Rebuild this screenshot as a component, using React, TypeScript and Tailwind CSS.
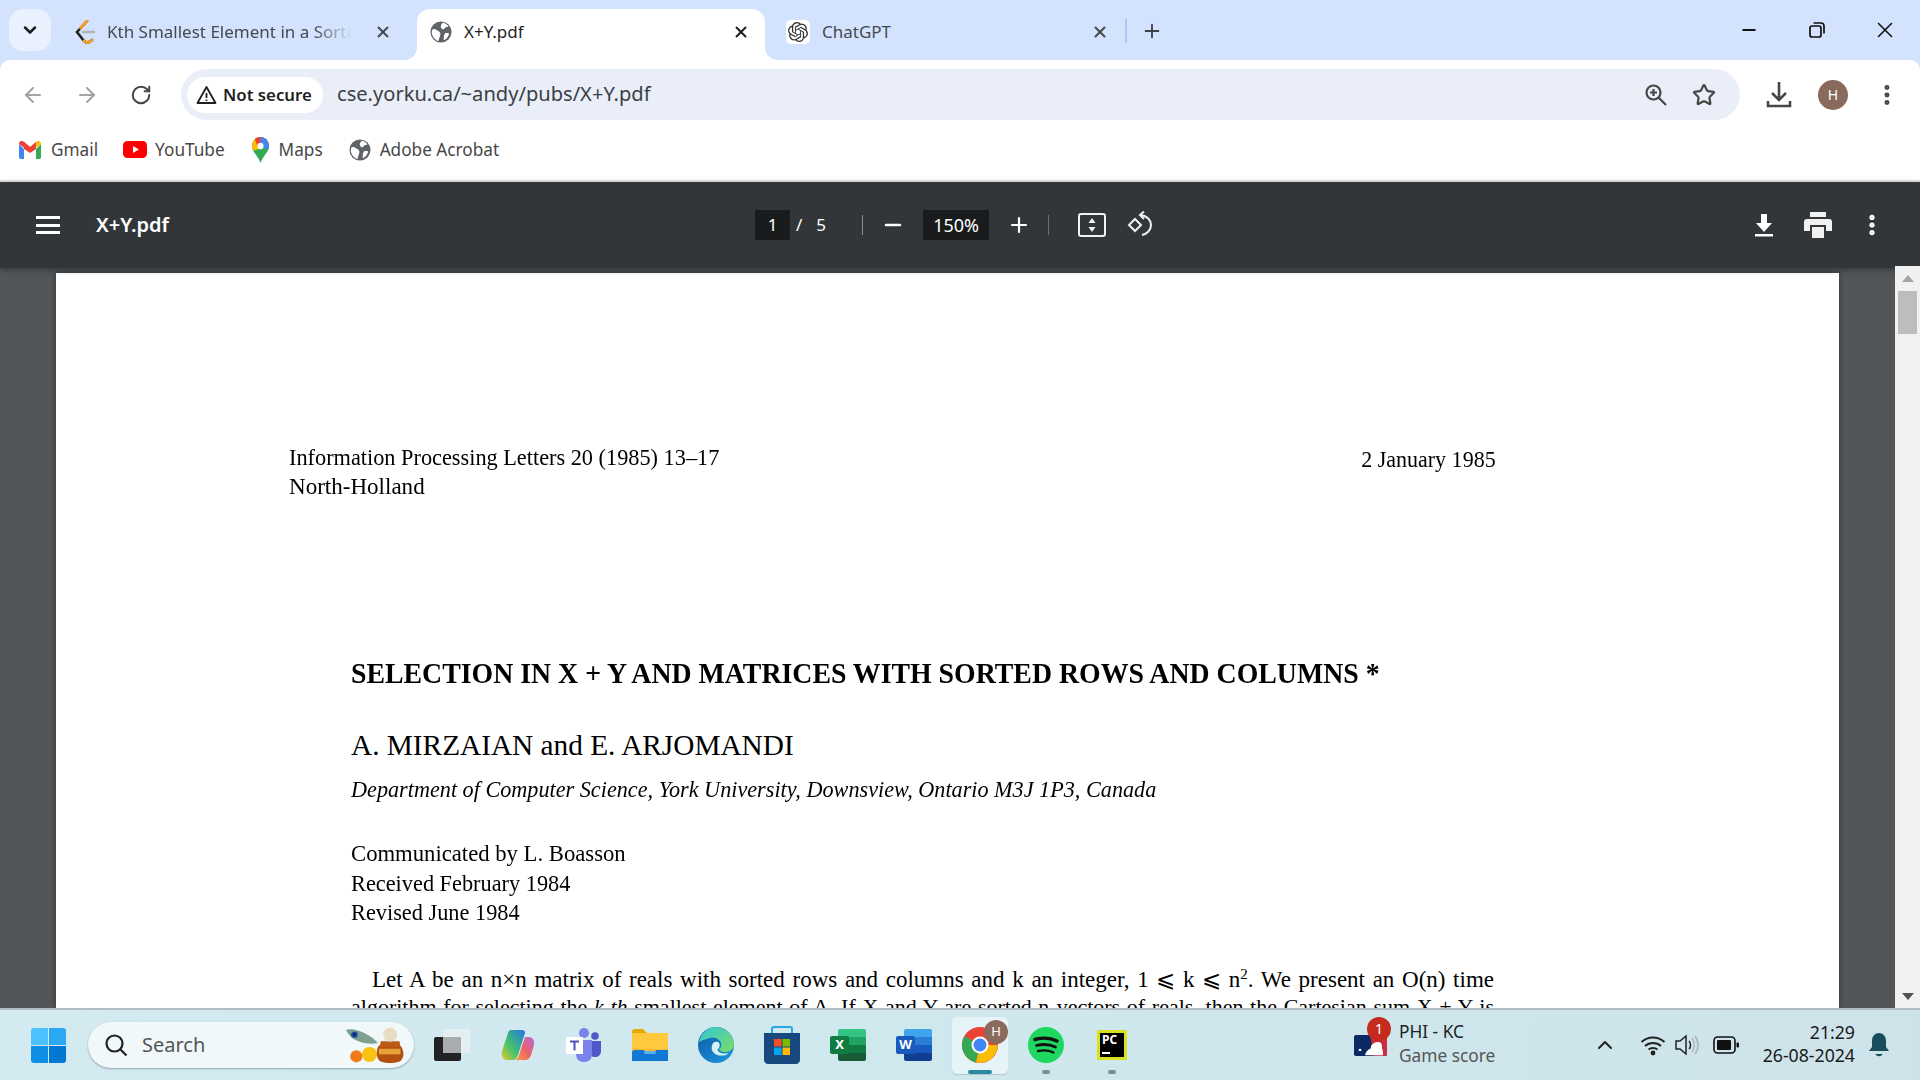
import { ArrowLeft, ArrowRight, ChevronDown, ChevronUp, Minus, MoreVertical, Plus, RotateCw, Star, X } from "lucide-react"
import { SiOpenai } from "react-icons/si"

const Globe = ({ size = 22, color = "#5f6368" }: { size?: number; color?: string }) => (
  <svg width={size} height={size} viewBox="0 0 24 24" className="shrink-0">
    <circle cx="12" cy="12" r="11.500" fill={color} />
    <path d="M3 9c3-1 4 1 6 2s3 3 2 5-1 4-2 6c-3-1-6-4-7-8 0-2 0-4 1-5zM14 2c2 0 5 2 6 4-2 1-3 0-4 2s-3 1-4-1 1-4 2-5zM17 13c2 0 4 0 4 1-1 3-3 6-6 7 0-3 0-7 2-8z" fill="#fff" />
  </svg>
)

const LeetCode = () => (
  <svg width="21" height="24" viewBox="0 0 21 24" className="shrink-0">
    <path d="M13 1 3 12l7 9c2 2 5 2 8-1" fill="none" stroke="#222" strokeWidth="2.600" strokeLinecap="round" />
    <path d="M9 12h11" stroke="#b3b3b3" strokeWidth="2.600" strokeLinecap="round" />
    <path d="M13 1 6.500 8M10 21c2 2 5 2 8-1" fill="none" stroke="#f89f1b" strokeWidth="2.600" strokeLinecap="round" />
  </svg>
)

const ChatGptIcon = () => (
  <div className="flex h-[24px] w-[24px] shrink-0 items-center justify-center rounded-[5px] bg-white">
    <SiOpenai size={20} color="#333" />
  </div>
)

const GmailIcon = () => (
  <svg width="22" height="18" viewBox="0 0 22 18" className="shrink-0">
    <path d="M0 3v13c0 1 .7 2 2 2h3V8z" fill="#4285f4" />
    <path d="M22 3v13c0 1-.7 2-2 2h-3V8z" fill="#34a853" />
    <path d="M0 3c0-3 3-4 5-2l6 5v5L0 3z" fill="#ea4335" />
    <path d="M22 3c0-3-3-4-5-2l-6 5v5l11-8z" fill="#fbbc04" />
    <path d="M5 1v7l6 4 6-4V1l-6 5z" fill="#ea4335" />
  </svg>
)

const YouTubeIcon = () => (
  <svg width="24" height="17" viewBox="0 0 24 17" className="shrink-0">
    <rect width="24" height="17" rx="4.500" fill="#f00" />
    <path d="m10 5 6 3.500-6 3.500z" fill="#fff" />
  </svg>
)

const MapsIcon = () => (
  <svg width="17" height="26" viewBox="0 0 18 26" preserveAspectRatio="none" className="shrink-0">
    <defs>
      <clipPath id="pin">
        <path d="M9 0c5 0 9 4 9 9 0 6-6 9-9 17C6 18 0 15 0 9c0-5 4-9 9-9z" />
      </clipPath>
    </defs>
    <g clipPath="url(#pin)">
      <rect width="18" height="26" fill="#34a853" />
      <path d="M0 0h18v9L0 14z" fill="#fbbc04" />
      <path d="M2 0h16v5L6 9z" fill="#ea4335" />
      <path d="M9 0h9v13L9 9z" fill="#4285f4" />
    </g>
    <circle cx="9" cy="9" r="3.200" fill="#fff" />
  </svg>
)

const WindowsIcon = () => (
  <div className="grid h-[35px] w-[35px] shrink-0 grid-cols-2 gap-[1px]">
    <div className="rounded-tl-[3px] bg-[#4cc2ff]" />
    <div className="rounded-tr-[3px] bg-[#2aa8f2]" />
    <div className="rounded-bl-[3px] bg-[#0f8fe3]" />
    <div className="rounded-br-[3px] bg-[#0078d4]" />
  </div>
)

const SearchArt = () => (
  <svg width="62" height="36" viewBox="0 0 66 38" className="shrink-0">
    <path d="M0 3c8-3 24 3 34 14-10 2-22-1-28-6-3-3-5-6-6-8z" fill="#7f9f8f" />
    <circle cx="9" cy="8" r="3.500" fill="#1c4fa8" />
    <circle cx="9" cy="8" r="1.500" fill="#0c2350" />
    <circle cx="11" cy="31" r="6.500" fill="#ee7b16" />
    <circle cx="25" cy="29" r="8" fill="#fbc30f" />
    <path d="M34 21c3-6 20-6 25 0 3 5 3 11-1 15-5 3-17 3-22 0-4-4-4-10-2-15z" fill="#b4500f" />
    <path d="M35 23h23v6H35z" fill="#e9a23a" />
    <path d="M37 15h20l1 6H36z" fill="#bb5a16" />
    <circle cx="47" cy="8" r="7.500" fill="#e8dcc2" />
  </svg>
)

const TaskViewIcon = () => (
  <div className="relative h-[32px] w-[36px]">
    <div className="absolute bottom-0 left-0 h-[24px] w-[27px] rounded-[2px] bg-[#222]" />
    <div className="absolute right-0 top-0 h-[24px] w-[27px] rounded-[2px] bg-[#e7eef0]/90" />
    <div className="absolute bottom-[8px] left-[9px] h-[16px] w-[18px] bg-[#a9acad]" />
  </div>
)

const CopilotIcon = () => (
  <svg width="34" height="32" viewBox="0 0 34 32">
    <defs>
      <linearGradient id="cp1" x1="0" y1="1" x2="1" y2="0">
        <stop offset="0" stopColor="#e6c92a" />
        <stop offset="0.4" stopColor="#45c46a" />
        <stop offset="1" stopColor="#2376e5" />
      </linearGradient>
      <linearGradient id="cp2" x1="0" y1="1" x2="1" y2="0">
        <stop offset="0" stopColor="#f2a33a" />
        <stop offset="0.5" stopColor="#ef5f6b" />
        <stop offset="1" stopColor="#b06ce0" />
      </linearGradient>
    </defs>
    <path d="M10 1h11c2 0 3 1 3 3l-7 22c-1 3-3 5-6 5H6C2 31 0 27 1 22L7 4c.5-2 1.500-3 3-3z" fill="url(#cp1)" />
    <path d="M24 8h4c4 0 6 4 5 8l-3 10c-1 3-3 5-6 5H14c2-1 3-2 4-5l6-18z" fill="url(#cp2)" />
  </svg>
)

const TeamsIcon = () => (
  <svg width="36" height="34" viewBox="0 0 36 34">
    <circle cx="29" cy="8" r="3.800" fill="#5059c9" />
    <path d="M23 13h12v10c0 4-3 6-6 6-3 0-6-2-6-6z" fill="#5059c9" />
    <circle cx="18" cy="5" r="5" fill="#7b83eb" />
    <path d="M10 12h16v14c0 5-3 8-8 8s-8-3-8-8z" fill="#7b83eb" />
    <rect x="0" y="9" width="17" height="17" fill="#fff" />
    <path d="M4 12.500h9v2H9.500v8h-2v-8H4z" fill="#4b53bc" />
  </svg>
)

const ExplorerIcon = () => (
  <svg width="36" height="32" viewBox="0 0 36 32">
    <path d="M0 3c0-2 1-3 3-3h8l4 4h-15z" fill="#e9a700" />
    <path d="M0 4h36v28H0z" fill="#ffc83d" />
    <path d="M0 20h36v12H0z" fill="#f4b63a" />
    <path d="M0 24c0-2 1-3 3-3h8l3 2h8l3-2h11v11H0z" fill="#0f78d4" />
    <rect x="12" y="22" width="12" height="3" rx="1.500" fill="#5bb0ef" />
  </svg>
)

const EdgeIcon = () => (
  <svg width="36" height="36" viewBox="0 0 36 36">
    <defs>
      <linearGradient id="ed1" x1="0" y1="0" x2="1" y2="1">
        <stop offset="0" stopColor="#30c8d8" />
        <stop offset="1" stopColor="#7ddc63" />
      </linearGradient>
      <linearGradient id="ed2" x1="0" y1="0" x2="1" y2="1">
        <stop offset="0" stopColor="#0c59a4" />
        <stop offset="1" stopColor="#1d9be0" />
      </linearGradient>
    </defs>
    <circle cx="18" cy="18" r="18" fill="url(#ed2)" />
    <path d="M1 15C3 6 10 0 18 0c10 0 18 8 18 17 0 5-4 8-9 8-4 0-6-2-6-3 2-1 3-3 2-6-1-4-6-6-11-5-5 1-9 3-11 4z" fill="url(#ed1)" />
    <path d="M14 19c0-3 3-5 6-4 2 1 2 4 1 6-2 1-2 3 0 4 3 2 8 2 11 0l-4 3c-4 1-9 1-12-2-2-2-3-4-2-7z" fill="#d8f3f4" />
  </svg>
)

const StoreIcon = () => (
  <svg width="36" height="38" viewBox="0 0 36 38">
    <path d="M8 8V3c0-1 1-2 2-2h16c1 0 2 1 2 2v5" fill="none" stroke="#27a9e8" strokeWidth="2" />
    <path d="M0 7h36v27c0 2-2 4-4 4H4c-2 0-4-2-4-4z" fill="#17497f" />
    <rect x="10" y="13" width="7.500" height="7.500" fill="#f25022" />
    <rect x="18.500" y="13" width="7.500" height="7.500" fill="#7fba00" />
    <rect x="10" y="21.500" width="7.500" height="7.500" fill="#00a4ef" />
    <rect x="18.500" y="21.500" width="7.500" height="7.500" fill="#ffb900" />
  </svg>
)

const OfficeIcon = ({ letter, bands, tile }: { letter: string; bands: string[]; tile: string }) => (
  <div className="relative h-[32px] w-[36px]">
    <div className="absolute inset-y-0 left-[8px] right-0 flex flex-col overflow-hidden rounded-[2px]">
      {bands.map((b) => (
        <div key={b} className="flex-1" style={{ backgroundColor: b }} />
      ))}
    </div>
    <div className="absolute left-0 top-[7px] flex h-[18px] w-[19px] items-center justify-center rounded-[2px] text-[13px] font-bold text-white" style={{ backgroundColor: tile }}>
      {letter}
    </div>
  </div>
)

const ChromeIcon = () => (
  <svg width="36" height="36" viewBox="0 0 36 36">
    <circle cx="18" cy="18" r="18" fill="#ea4335" />
    <path d="M18 18 2.500 9A18 18 0 0 0 14 35.500z" fill="#34a853" />
    <path d="M18 18h17.800A18 18 0 0 1 14 35.500z" fill="#fbbc04" />
    <path d="M18 10h16.500A18 18 0 0 1 35.800 18H18z" fill="#ea4335" />
    <circle cx="18" cy="18" r="8.500" fill="#fff" />
    <circle cx="18" cy="18" r="6.500" fill="#4285f4" />
  </svg>
)

const SpotifyIcon = () => (
  <svg width="36" height="36" viewBox="0 0 36 36">
    <circle cx="18" cy="18" r="18" fill="#1ed760" />
    <g fill="none" stroke="#111" strokeLinecap="round">
      <path d="M7 12.500c7-2 16-1.500 22 1.500" strokeWidth="3.400" />
      <path d="M8.500 18.500c6-1.500 13.500-1 19 1.500" strokeWidth="2.800" />
      <path d="M10 24c5-1 11-.8 15.500 1.500" strokeWidth="2.300" />
    </g>
  </svg>
)

const PyCharmIcon = () => (
  <div className="flex h-[30px] w-[30px] flex-col bg-black px-[3px] pt-[1px] text-[12px] font-bold leading-[14px] text-white outline-[3px] -outline-offset-[3px] outline-[#d9e021]">
    <span className="pl-[2px] pt-[2px]">PC</span>
    <span className="ml-[2px] mt-[5px] h-[2px] w-[8px] bg-white" />
  </div>
)

const MlbIcon = () => (
  <svg width="33" height="21" viewBox="0 0 33 24" preserveAspectRatio="none" className="shrink-0">
    <rect width="33" height="24" rx="2" fill="#0b2a63" />
    <path d="M16 0h15c1 0 2 1 2 2v20c0 1-1 2-2 2H20z" fill="#cc2c3e" />
    <path d="M11 23c1-5 4-7 6-8-1-3 3-7 7-7s4 4 4 7c1 2 1 5 1 8z" fill="#fff" />
    <circle cx="6" cy="17" r="1.400" fill="#fff" />
  </svg>
)

const BrowserTab = ({ active, width, left, icon, title, fade, closePad }: { active?: boolean; width: string; left: string; icon: React.ReactNode; title: string; fade?: boolean; closePad: string }) => (
  <div className={`relative flex h-[51px] shrink-0 items-center ${width} ${left} ${closePad} ${active ? "rounded-t-[13px] bg-white" : ""}`}>
    {active && <span className="absolute -left-[12px] bottom-0 h-[12px] w-[12px] bg-[radial-gradient(circle_at_0_0,transparent_11.500px,white_12px)]" />}
    {active && <span className="absolute -right-[12px] bottom-0 h-[12px] w-[12px] bg-[radial-gradient(circle_at_100%_0,transparent_11.500px,white_12px)]" />}
    <div className="-mt-[6px] flex min-w-0 flex-1 items-center gap-[12px]">
      {icon}
      <span className={`min-w-0 flex-1 overflow-hidden whitespace-nowrap text-[17px] ${active ? "text-[#1f1f1f]" : "text-[#46494f]"} ${fade ? "[mask-image:linear-gradient(to_right,black_82%,transparent_97%)]" : ""}`}>{title}</span>
      <X size={18} strokeWidth={2.600} className={`mx-[3px] shrink-0 ${active ? "text-[#1f1f1f]" : "text-[#46494f]"}`} />
    </div>
  </div>
)

const TabStrip = () => (
  <div className="flex h-[60px] shrink-0 items-start bg-[#d3e3fd] pt-[9px]">
    <div className="ml-[9px] flex h-[42px] w-[42px] shrink-0 items-center justify-center rounded-[14px] bg-[#e9f0fe]">
      <ChevronDown size={20} strokeWidth={3} className="text-[#1f1f1f]" />
    </div>
    <BrowserTab width="w-[356px]" left="ml-[10px] pl-[13px]" closePad="pr-[22px]" icon={<LeetCode />} title="Kth Smallest Element in a Sorted Matrix" fade />
    <BrowserTab active width="w-[348px]" left="pl-[13px]" closePad="pr-[12px]" icon={<Globe />} title="X+Y.pdf" />
    <BrowserTab width="w-[357px]" left="pl-[21px]" closePad="pr-[10px]" icon={<ChatGptIcon />} title="ChatGPT" />
    <div className="ml-[3px] mt-[10px] h-[24px] w-[2px] bg-[#a8c7fa]" />
    <Plus size={22} strokeWidth={2} className="ml-[14px] mt-[11px] text-[#3c4043]" />
    <div className="ml-auto flex pr-px text-[#111]">
      <div className="flex h-[42px] w-[68px] items-center justify-center">
        <Minus size={20} strokeWidth={2.200} />
      </div>
      <div className="flex h-[42px] w-[68px] items-center justify-center">
        <svg width="18" height="18" viewBox="0 0 18 18" fill="none" stroke="#111" strokeWidth="1.700">
          <rect x="2" y="5" width="11" height="11" rx="2" />
          <path d="M5.500 2H13c2 0 3 1 3 3v7.500" />
        </svg>
      </div>
      <div className="flex h-[42px] w-[68px] items-center justify-center">
        <X size={26} strokeWidth={1.500} />
      </div>
    </div>
  </div>
)

const Toolbar = () => (
  <div className="flex h-[60px] shrink-0 bg-[#d3e3fd]">
    <div className="flex h-full w-full items-start rounded-t-[10px] bg-white pl-[6px] pt-[9px]">
      <div className="flex h-[51px] w-[54px] items-center justify-center text-[#a0a4a8]">
        <ArrowLeft size={24} strokeWidth={2} />
      </div>
      <div className="flex h-[51px] w-[54px] items-center justify-center text-[#a0a4a8]">
        <ArrowRight size={24} strokeWidth={2} />
      </div>
      <div className="flex h-[51px] w-[54px] items-center justify-center text-[#474747]">
        <RotateCw size={22} strokeWidth={2.200} />
      </div>
      <div className="ml-[13px] flex h-[51px] w-[1559px] items-center rounded-full bg-[#e9eef8] pl-[6px] pr-[12px]">
        <div className="flex h-[36px] w-[136px] items-center gap-[6px] rounded-full bg-white pl-[9px]">
          <svg width="21" height="20" viewBox="0 0 21 20" fill="none" stroke="#1f1f1f" strokeWidth="1.800" className="shrink-0">
            <path d="M10.500 2 19.500 18h-18z" strokeLinejoin="round" />
            <path d="M10.500 8v5M10.500 14.500v1.500" />
          </svg>
          <span className="whitespace-nowrap text-[16.800px] font-semibold text-[#1f1f1f]">Not secure</span>
        </div>
        <span className="ml-[14px] text-[20.100px] text-[#3c4043]">cse.yorku.ca/~andy/pubs/X+Y.pdf</span>
        <div className="ml-auto flex w-[48px] justify-center">
          <svg width="24" height="24" viewBox="0 0 24 24" fill="none" stroke="#474747" strokeWidth="2.200">
            <circle cx="9.500" cy="9.500" r="7" />
            <path d="m14.500 14.500 7.500 7.500M9.500 6v7M6 9.500h7" />
          </svg>
        </div>
        <div className="flex w-[48px] justify-center text-[#474747]">
          <Star size={24} strokeWidth={2.200} />
        </div>
      </div>
      <div className="ml-[12px] flex h-[51px] w-[54px] items-center justify-center">
        <svg width="26" height="28" viewBox="0 0 26 28" fill="none" stroke="#474747" strokeWidth="2.600">
          <path d="M13 1v17M6 12l7 7 7-7M2 20v5h22v-5" />
        </svg>
      </div>
      <div className="flex h-[51px] w-[54px] items-center justify-center">
        <div className="flex h-[30px] w-[30px] items-center justify-center rounded-full bg-[#8a6a5c] text-[14px] text-white">H</div>
      </div>
      <div className="flex h-[51px] w-[54px] items-center justify-center text-[#474747]">
        <MoreVertical size={26} strokeWidth={2.600} />
      </div>
    </div>
  </div>
)

const Bookmark = ({ icon, label, gap, after }: { icon: React.ReactNode; label: string; gap: string; after: string }) => (
  <div className={`flex items-center ${gap} ${after}`}>
    {icon}
    <span className="text-[17.200px] text-[#474747]">{label}</span>
  </div>
)

const BookmarksBar = () => (
  <div className="flex h-[62px] shrink-0 items-center border-b-2 border-[#e3e3e3] bg-white pl-[19px]">
    <Bookmark icon={<GmailIcon />} label="Gmail" gap="gap-[10px]" after="mr-[25px]" />
    <Bookmark icon={<YouTubeIcon />} label="YouTube" gap="gap-[8px]" after="mr-[27px]" />
    <Bookmark icon={<MapsIcon />} label="Maps" gap="gap-[10px]" after="mr-[26px]" />
    <Bookmark icon={<Globe />} label="Adobe Acrobat" gap="gap-[9px]" after="" />
  </div>
)

const PdfToolbar = () => (
  <div className="relative z-10 flex h-[86px] shrink-0 items-center bg-[#323639] text-white shadow-[0_2px_6px_rgba(0,0,0,0.35)]">
    <div className="flex w-[755px] shrink-0 items-center pl-[36px]">
      <div className="flex h-[18px] w-[24px] flex-col justify-between">
        <span className="h-[3px] bg-white" />
        <span className="h-[3px] bg-white" />
        <span className="h-[3px] bg-white" />
      </div>
      <span className="ml-[36px] text-[20px] font-semibold">X+Y.pdf</span>
    </div>
    <div className="flex h-[30px] w-[35px] items-center justify-center bg-[#191b1c] text-[17px]">1</div>
    <span className="ml-[6px] text-[17px]">/</span>
    <span className="ml-[14px] text-[17px]">5</span>
    <div className="ml-[36px] h-[20px] w-px bg-[#8a8d8f]" />
    <Minus size={24} strokeWidth={2.500} className="ml-[18px]" />
    <div className="ml-[18px] flex h-[30px] w-[66px] items-center justify-center bg-[#191b1c] text-[18px]">150%</div>
    <Plus size={24} strokeWidth={2.200} className="ml-[18px]" />
    <div className="ml-[17px] h-[20px] w-px bg-[#6d7072]" />
    <svg width="28" height="24" viewBox="0 0 28 24" fill="none" className="ml-[29px]">
      <rect x="1" y="1" width="26" height="22" rx="2" stroke="#f1f1f1" strokeWidth="2" />
      <path d="m14 5 3.500 5h-7zM14 19l-3.500-5h7z" fill="#f1f1f1" />
    </svg>
    <svg width="28" height="28" viewBox="0 0 28 28" fill="none" stroke="#f1f1f1" strokeWidth="2" className="ml-[20px]">
      <path d="m9 8 6 6-6 6-6-6z" />
      <path d="M15 4c6 1 10 5 10 10s-4 9-9 10" />
      <path d="M18 0.500 14 4l4 4" />
    </svg>
    <div className="ml-auto flex items-center pr-[21px]">
      <div className="flex w-[54px] justify-center">
        <svg width="20" height="24" viewBox="0 0 20 24" fill="#fff">
          <path d="M7 1h6v9h5l-8 9-8-9h5zM1 21h18v2.500H1z" />
        </svg>
      </div>
      <div className="flex w-[54px] justify-center">
        <svg width="28" height="26" viewBox="0 0 28 26" fill="#f1f1f1">
          <path d="M6 0h16v5H6zM3 7h22c2 0 3 1 3 3v9h-6v-6H6v6H0v-9c0-2 1-3 3-3zM8 15h12v11H8z" />
        </svg>
      </div>
      <div className="flex w-[54px] justify-center">
        <MoreVertical size={26} strokeWidth={2.800} />
      </div>
    </div>
  </div>
)

const Scrollbar = () => (
  <div className="relative z-20 -mt-[2px] flex w-[25px] shrink-0 flex-col items-center bg-[#f1f1f1]">
    <span className="mt-[9px] h-0 w-0 border-x-[6px] border-b-[7px] border-x-transparent border-b-[#a3a3a3]" />
    <div className="mt-[9px] h-[43px] w-[19px] bg-[#bdbdbd]" />
    <span className="mb-[8px] mt-auto h-0 w-0 border-x-[6px] border-t-[7px] border-x-transparent border-t-[#505050]" />
  </div>
)

const PdfPage = () => (
  <div className="mx-[56px] mt-[5px] flex-1 overflow-hidden bg-white font-['Liberation_Serif',serif] text-black shadow-[0_0_6px_rgba(0,0,0,0.4)]">
    <div className="flex justify-between pl-[233px] pr-[343px] pt-[170px] text-[24px]">
      <div>
        <div className="h-[29px] origin-left scale-x-[0.929] whitespace-nowrap leading-[29px]">Information Processing Letters 20 (1985) 13–17</div>
        <div className="h-[29px] origin-left scale-x-[0.96] whitespace-nowrap leading-[29px]">North-Holland</div>
      </div>
      <div className="mt-[2px] h-[29px] origin-right scale-x-[0.917] whitespace-nowrap leading-[29px]">2 January 1985</div>
    </div>
    <div className="pl-[295px]">
      <div className="mt-[157px] h-[30px] origin-left scale-x-[0.927] whitespace-nowrap text-[30px] font-bold leading-[30px]">SELECTION IN X + Y AND MATRICES WITH SORTED ROWS AND COLUMNS *</div>
      <div className="mt-[42px] h-[30px] whitespace-nowrap text-[29.300px] leading-[30px]">A. MIRZAIAN and E. ARJOMANDI</div>
      <div className="mt-[14px] h-[30px] origin-left scale-x-[0.925] whitespace-nowrap text-[24px] italic leading-[30px]">Department of Computer Science, York University, Downsview, Ontario M3J 1P3, Canada</div>
      <div className="mt-[35px] text-[24px] leading-[29.500px]">
        <div className="origin-left scale-x-[0.945]">Communicated by L. Boasson</div>
        <div className="origin-left scale-x-[0.93]">Received February 1984</div>
        <div className="origin-left scale-x-[0.93]">Revised June 1984</div>
      </div>
      <div className="mt-[38px] w-[1143px] leading-[27px] [text-align-last:justify]">
        <div className="pl-[21px] text-[23px]">Let A be an n×n matrix of reals with sorted rows and columns and k an integer, 1 ⩽ k ⩽ n<sup className="text-[15px] leading-none">2</sup>. We present an O(n) time</div>
        <div className="whitespace-nowrap text-[22px]">algorithm for selecting the <i>k th</i> smallest element of A. If X and Y are sorted n-vectors of reals, then the Cartesian sum X + Y is</div>
      </div>
    </div>
  </div>
)

const TaskCell = ({ children, dot, active }: { children: React.ReactNode; dot?: boolean; active?: boolean }) => (
  <div className={`relative flex h-[57px] w-[56px] shrink-0 items-center justify-center rounded-[5px] ${active ? "bg-[#e6f3f7] shadow-[0_1px_1px_rgba(0,0,0,0.15)]" : ""}`}>
    {children}
    {dot && <span className="absolute bottom-0 left-[24px] h-[4px] w-[8px] rounded-full bg-[#7d8a90]" />}
    {active && <span className="absolute bottom-0 left-[16px] h-[4px] w-[24px] rounded-full bg-[#2a8aa0]" />}
  </div>
)

const Taskbar = () => (
  <div className="flex h-[72px] shrink-0 items-center border-t-2 border-[#b0bec2] bg-gradient-to-r from-[#d2eaf0] via-[#cfe8ee] to-[#cde3e9] pl-[31px]">
    <WindowsIcon />
    <div className="ml-[22px] flex h-[46px] w-[326px] shrink-0 items-center rounded-full bg-[#f0f8fa] pl-[16px] pr-[6px] shadow-[0_1px_2px_rgba(0,0,0,0.3)]">
      <svg width="24" height="24" viewBox="0 0 24 24" fill="none" stroke="#222" strokeWidth="2.200">
        <circle cx="10.500" cy="10.500" r="8" />
        <path d="m16.500 16.500 6 6" />
      </svg>
      <span className="ml-[14px] text-[20px] text-[#555]">Search</span>
      <div className="ml-auto">
        <SearchArt />
      </div>
    </div>
    <div className="ml-[10px] flex gap-[10px]">
      <TaskCell><TaskViewIcon /></TaskCell>
      <TaskCell><CopilotIcon /></TaskCell>
      <TaskCell><TeamsIcon /></TaskCell>
      <TaskCell><ExplorerIcon /></TaskCell>
      <TaskCell><EdgeIcon /></TaskCell>
      <TaskCell><StoreIcon /></TaskCell>
      <TaskCell><OfficeIcon letter="X" tile="#107c41" bands={["#33c481", "#21a366", "#107c41", "#185c37"]} /></TaskCell>
      <TaskCell><OfficeIcon letter="W" tile="#185abd" bands={["#41a5ee", "#2b7cd3", "#185abd", "#103f91"]} /></TaskCell>
      <TaskCell active>
        <ChromeIcon />
        <div className="absolute right-0 top-[3px] flex h-[24px] w-[24px] items-center justify-center rounded-full bg-[#8a6a5c] text-[13px] text-white">H</div>
      </TaskCell>
      <TaskCell dot><SpotifyIcon /></TaskCell>
      <TaskCell dot><PyCharmIcon /></TaskCell>
    </div>
    <div className="relative ml-[214px] shrink-0">
      <MlbIcon />
      <div className="absolute -right-[4px] -top-[18px] flex h-[24px] w-[24px] items-center justify-center rounded-full bg-[#c42b1c] text-[14px] text-white">1</div>
    </div>
    <div className="-mt-[2px] ml-[12px] w-[100px] shrink-0 text-[17.300px] leading-[24px]">
      <div className="text-[#1f1f1f]">PHI - KC</div>
      <div className="text-[#555]">Game score</div>
    </div>
    <ChevronUp size={24} strokeWidth={2} className="ml-[94px] shrink-0 text-[#222]" />
    <svg width="26" height="22" viewBox="0 0 26 22" fill="none" stroke="#222" strokeWidth="1.800" className="ml-[23px] shrink-0">
      <path d="M1.500 8c6.500-6 16.500-6 23 0M5 12c4.500-4 11.500-4 16 0M8.500 15.500c2.500-2 6.500-2 9 0" />
      <circle cx="13" cy="19" r="1.500" fill="#222" />
    </svg>
    <svg width="26" height="24" viewBox="0 0 26 24" fill="none" strokeWidth="1.500" className="ml-[8px] shrink-0">
      <path d="M2 8h4l6-5v18l-6-5H2z" stroke="#222" />
      <path d="M15 8c2 2 2 6 0 8" stroke="#222" />
      <path d="M18 5c3 4 3 10 0 14M21 3c4 5 4 13 0 18" stroke="#a8b5b9" />
    </svg>
    <svg width="26" height="18" viewBox="0 0 26 18" className="ml-[13px] shrink-0">
      <rect x="1" y="1" width="21" height="16" rx="3.500" fill="none" stroke="#111" strokeWidth="1.600" />
      <rect x="4" y="4" width="14" height="10" rx="1" fill="#111" />
      <rect x="23.500" y="6.500" width="2.500" height="5" rx="1" fill="#111" />
    </svg>
    <div className="-mt-[3px] w-[116px] shrink-0 text-right text-[17.700px] leading-[23px] text-[#1a1a1a]">
      <div>21:29</div>
      <div>26-08-2024</div>
    </div>
    <svg width="24" height="26" viewBox="0 0 24 26" fill="#174d5c" className="ml-[12px] shrink-0">
      <path d="M12 1c4 0 7 3 7 8v6l3 4H2l3-4V9c0-5 3-8 7-8zM8.500 22h7c-1 3-6 3-7 0z" />
    </svg>
  </div>
)

export default function App() {
  return (
    <div className="flex h-screen w-full flex-col overflow-hidden font-['Noto_Sans',sans-serif]">
      <TabStrip />
      <Toolbar />
      <BookmarksBar />
      <PdfToolbar />
      <div className="flex min-h-0 flex-1 bg-[#525659]">
        <div className="flex min-w-0 flex-1 flex-col">
          <PdfPage />
        </div>
        <Scrollbar />
      </div>
      <Taskbar />
    </div>
  )
}
